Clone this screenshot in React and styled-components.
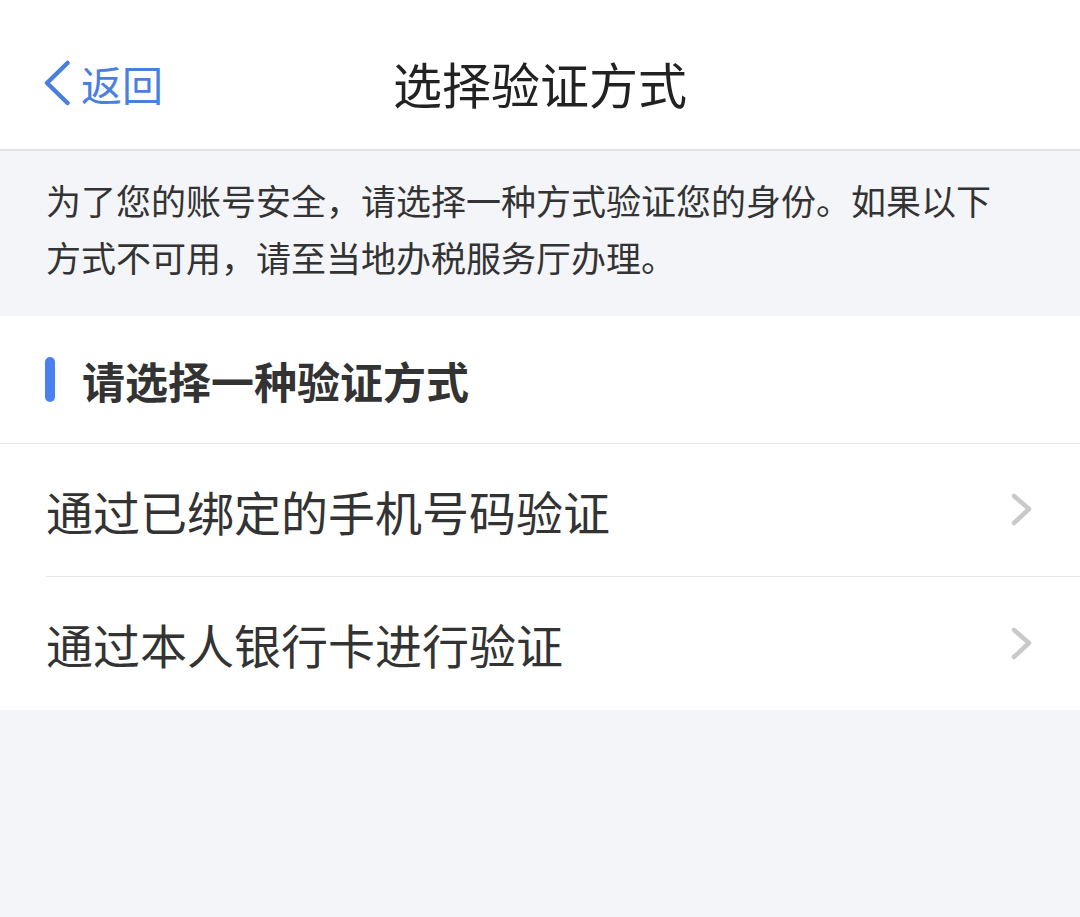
import React from 'react';
import styled, { createGlobalStyle } from 'styled-components';

const GlobalStyle = createGlobalStyle`
  html, body {
    margin: 0;
    padding: 0;
    background: #f4f5f9;
    font-family: "Noto Sans CJK SC", "Noto Sans", sans-serif;
  }
`;

const Page = styled.div`
  width: 1080px;
  min-height: 917px;
  background: #f4f5f9;
  display: flex;
  flex-direction: column;
`;

const NavBar = styled.div`
  height: 151px;
  box-sizing: border-box;
  padding-top: 17px;
  background: #ffffff;
  border-bottom: 2px solid #e2e2e6;
  display: grid;
  grid-template-columns: 1fr auto 1fr;
  align-items: center;
`;

const BackButton = styled.div`
  display: flex;
  align-items: center;
  gap: 10px;
  padding-left: 43px;
  color: #4a7fe0;
  font-size: 41px;
  line-height: 1;
`;

const Title = styled.div`
  font-size: 49px;
  color: #222222;
  line-height: 1;
  margin-top: -2px;
`;

const Notice = styled.div`
  padding: 20px 80px 31px 46px;
  font-size: 35px;
  line-height: 57px;
  color: #333333;
`;

const Section = styled.div`
  background: #ffffff;
  display: flex;
  flex-direction: column;
`;

const SectionHead = styled.div`
  height: 128px;
  display: flex;
  align-items: center;
  gap: 27px;
  padding-left: 45px;
  box-sizing: border-box;
  border-bottom: 1px solid #e6e6e8;
  font-size: 43px;
  font-weight: 700;
  color: #333333;
`;

const Bar = styled.span`
  width: 10px;
  height: 45px;
  border-radius: 5px;
  background: #4a80f0;
`;

const Row = styled.div`
  height: 133px;
  box-sizing: border-box;
  display: flex;
  align-items: center;
  justify-content: space-between;
  margin-left: 46px;
  padding-right: 47px;
  border-bottom: ${p => (p.last ? 'none' : '1px solid #e6e6e8')};
  font-size: 47px;
  color: #333333;
  line-height: 1;
`;

const BackIcon = () => (
  <svg width="28" height="46" viewBox="0 0 28 46">
    <polyline
      points="24.5,3 4,23 24.5,43"
      fill="none"
      stroke="#4a7fe0"
      strokeWidth="4.5"
      strokeLinecap="round"
      strokeLinejoin="round"
    />
  </svg>
);

const Chevron = () => (
  <svg width="22" height="34" viewBox="0 0 22 34">
    <polyline
      points="3,3 18,16 3,30"
      fill="none"
      stroke="#c9c9cc"
      strokeWidth="4.5"
      strokeLinecap="round"
      strokeLinejoin="round"
    />
  </svg>
);

const options = ['通过已绑定的手机号码验证', '通过本人银行卡进行验证'];

export default function App() {
  return (
    <Page>
      <GlobalStyle />
      <NavBar>
        <BackButton>
          <BackIcon />
          <span>返回</span>
        </BackButton>
        <Title>选择验证方式</Title>
        <div />
      </NavBar>
      <Notice>
        为了您的账号安全，请选择一种方式验证您的身份。如果以下方式不可用，请至当地办税服务厅办理。
      </Notice>
      <Section>
        <SectionHead>
          <Bar />
          <span>请选择一种验证方式</span>
        </SectionHead>
        {options.map((text, i) => (
          <Row key={text} last={i === options.length - 1}>
            <span>{text}</span>
            <Chevron />
          </Row>
        ))}
      </Section>
    </Page>
  );
}
